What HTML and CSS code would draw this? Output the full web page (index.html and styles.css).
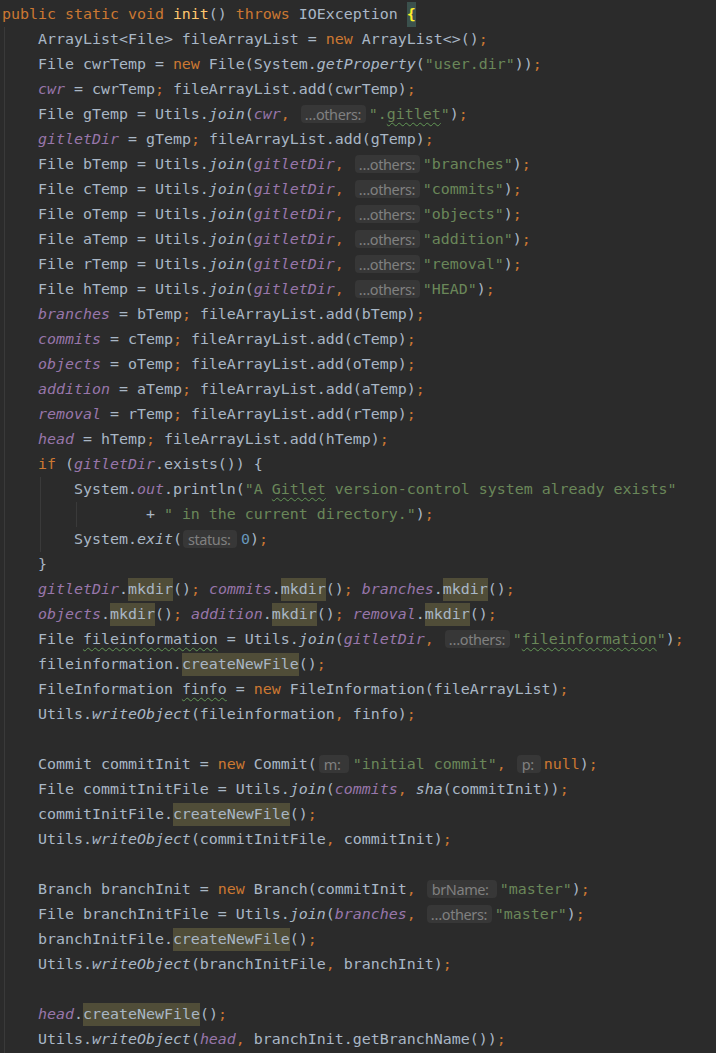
FILE: index.html
```html
<!DOCTYPE html>
<html>
<head>
<meta charset="utf-8">
<link rel="stylesheet" href="styles.css">
</head>
<body>
<div class="editor">
<div class="guide g0"></div>
<div class="guide g4"></div>
<div class="guide g8"></div>
<div class="ln"><span class="k">public static void </span><span class="m">init</span>() <span class="k">throws </span>IOException <span class="br">{</span></div>
<div class="ln">    ArrayList&lt;File&gt; fileArrayList = <span class="k">new</span> ArrayList&lt;&gt;()<span class="k">;</span></div>
<div class="ln">    File cwrTemp = <span class="k">new</span> File(System.<span class="sm">getProperty</span>(<span class="s">"user.dir"</span>))<span class="k">;</span></div>
<div class="ln">    <span class="f">cwr</span> = cwrTemp<span class="k">;</span> fileArrayList.add(cwrTemp)<span class="k">;</span></div>
<div class="ln">    File gTemp = Utils.<span class="sm">join</span>(<span class="f">cwr</span><span class="k">, </span><span class="h others">…others:</span><span class="s">".<span class="ty">gitlet</span>"</span>)<span class="k">;</span></div>
<div class="ln">    <span class="f">gitletDir</span> = gTemp<span class="k">;</span> fileArrayList.add(gTemp)<span class="k">;</span></div>
<div class="ln">    File bTemp = Utils.<span class="sm">join</span>(<span class="f">gitletDir</span><span class="k">, </span><span class="h others">…others:</span><span class="s">"branches"</span>)<span class="k">;</span></div>
<div class="ln">    File cTemp = Utils.<span class="sm">join</span>(<span class="f">gitletDir</span><span class="k">, </span><span class="h others">…others:</span><span class="s">"commits"</span>)<span class="k">;</span></div>
<div class="ln">    File oTemp = Utils.<span class="sm">join</span>(<span class="f">gitletDir</span><span class="k">, </span><span class="h others">…others:</span><span class="s">"objects"</span>)<span class="k">;</span></div>
<div class="ln">    File aTemp = Utils.<span class="sm">join</span>(<span class="f">gitletDir</span><span class="k">, </span><span class="h others">…others:</span><span class="s">"addition"</span>)<span class="k">;</span></div>
<div class="ln">    File rTemp = Utils.<span class="sm">join</span>(<span class="f">gitletDir</span><span class="k">, </span><span class="h others">…others:</span><span class="s">"removal"</span>)<span class="k">;</span></div>
<div class="ln">    File hTemp = Utils.<span class="sm">join</span>(<span class="f">gitletDir</span><span class="k">, </span><span class="h others">…others:</span><span class="s">"HEAD"</span>)<span class="k">;</span></div>
<div class="ln">    <span class="f">branches</span> = bTemp<span class="k">;</span> fileArrayList.add(bTemp)<span class="k">;</span></div>
<div class="ln">    <span class="f">commits</span> = cTemp<span class="k">;</span> fileArrayList.add(cTemp)<span class="k">;</span></div>
<div class="ln">    <span class="f">objects</span> = oTemp<span class="k">;</span> fileArrayList.add(oTemp)<span class="k">;</span></div>
<div class="ln">    <span class="f">addition</span> = aTemp<span class="k">;</span> fileArrayList.add(aTemp)<span class="k">;</span></div>
<div class="ln">    <span class="f">removal</span> = rTemp<span class="k">;</span> fileArrayList.add(rTemp)<span class="k">;</span></div>
<div class="ln">    <span class="f">head</span> = hTemp<span class="k">;</span> fileArrayList.add(hTemp)<span class="k">;</span></div>
<div class="ln">    <span class="k">if </span>(<span class="f">gitletDir</span>.exists()) {</div>
<div class="ln">        System.<span class="f">out</span>.println(<span class="s">"A <span class="ty">Gitlet</span> version-control system already exists"</span></div>
<div class="ln">                + <span class="s">" in the current directory."</span>)<span class="k">;</span></div>
<div class="ln">        System.<span class="sm">exit</span>(<span class="h status">status:</span><span class="n">0</span>)<span class="k">;</span></div>
<div class="ln">    }</div>
<div class="ln">    <span class="f">gitletDir</span>.<span class="hl">mkdir</span>()<span class="k">;</span> <span class="f">commits</span>.<span class="hl">mkdir</span>()<span class="k">;</span> <span class="f">branches</span>.<span class="hl">mkdir</span>()<span class="k">;</span></div>
<div class="ln">    <span class="f">objects</span>.<span class="hl">mkdir</span>()<span class="k">;</span> <span class="f">addition</span>.<span class="hl">mkdir</span>()<span class="k">;</span> <span class="f">removal</span>.<span class="hl">mkdir</span>()<span class="k">;</span></div>
<div class="ln">    File <span class="ty">fileinformation</span> = Utils.<span class="sm">join</span>(<span class="f">gitletDir</span><span class="k">, </span><span class="h others">…others:</span><span class="s">"<span class="ty">fileinformation</span>"</span>)<span class="k">;</span></div>
<div class="ln">    fileinformation.<span class="hl">createNewFile</span>()<span class="k">;</span></div>
<div class="ln">    FileInformation <span class="ty">finfo</span> = <span class="k">new</span> FileInformation(fileArrayList)<span class="k">;</span></div>
<div class="ln">    Utils.<span class="sm">writeObject</span>(fileinformation<span class="k">, </span>finfo)<span class="k">;</span></div>
<div class="ln"> </div>
<div class="ln">    Commit commitInit = <span class="k">new</span> Commit(<span class="h hm">m:</span><span class="s">"initial commit"</span><span class="k">, </span><span class="h hp">p:</span><span class="k">null</span>)<span class="k">;</span></div>
<div class="ln">    File commitInitFile = Utils.<span class="sm">join</span>(<span class="f">commits</span><span class="k">, </span><span class="sm">sha</span>(commitInit))<span class="k">;</span></div>
<div class="ln">    commitInitFile.<span class="hl">createNewFile</span>()<span class="k">;</span></div>
<div class="ln">    Utils.<span class="sm">writeObject</span>(commitInitFile<span class="k">, </span>commitInit)<span class="k">;</span></div>
<div class="ln"> </div>
<div class="ln">    Branch branchInit = <span class="k">new</span> Branch(commitInit<span class="k">, </span><span class="h brname">brName:</span><span class="s">"master"</span>)<span class="k">;</span></div>
<div class="ln">    File branchInitFile = Utils.<span class="sm">join</span>(<span class="f">branches</span><span class="k">, </span><span class="h others">…others:</span><span class="s">"master"</span>)<span class="k">;</span></div>
<div class="ln">    branchInitFile.<span class="hl">createNewFile</span>()<span class="k">;</span></div>
<div class="ln">    Utils.<span class="sm">writeObject</span>(branchInitFile<span class="k">, </span>branchInit)<span class="k">;</span></div>
<div class="ln"> </div>
<div class="ln">    <span class="f">head</span>.<span class="hl">createNewFile</span>()<span class="k">;</span></div>
<div class="ln">    Utils.<span class="sm">writeObject</span>(<span class="f">head</span><span class="k">, </span>branchInit.getBranchName())<span class="k">;</span></div>
</div>
</body>
</html>
```
FILE: styles.css
```css
html, body {
  margin: 0;
  padding: 0;
  background: #2b2b2b;
}

.editor {
  position: relative;
  box-sizing: border-box;
  min-height: 1053px;
  padding-top: 2px;
  background: #2b2b2b;
  color: #a9b7c6;
  font-family: "DejaVu Sans Mono", "Liberation Mono", monospace;
  font-size: 14.95px;
  overflow: hidden;
}

.ln {
  height: 25px;
  line-height: 25px;
  padding-left: 2px;
  white-space: pre;
}

.k { color: #cc7832; }
.s { color: #6a8759; }
.n { color: #6897bb; }
.m { color: #ffc66d; }
.f { color: #9876aa; font-style: italic; }
.sm { font-style: italic; }

.br {
  display: inline-block;
  height: 25px;
  line-height: 25px;
  vertical-align: top;
  background: #3b514d;
  color: #ffef28;
  font-weight: bold;
}

.hl {
  background: #504d38;
  padding: 2px 0 3px;
}

.ty {
  text-decoration: underline wavy #629755;
  text-decoration-thickness: 1px;
  text-underline-offset: 3px;
}

.h {
  display: inline-block;
  box-sizing: border-box;
  height: 18px;
  line-height: 18px;
  margin: 3px 3px 0 2px;
  padding-left: 5px;
  vertical-align: top;
  border-radius: 4px;
  background: #373737;
  color: #808080;
  font-family: "Noto Sans", "Open Sans", sans-serif;
  font-size: 14.5px;
  font-style: normal;
  letter-spacing: -0.4px;
  white-space: nowrap;
  overflow: hidden;
}

.others { width: 65px; padding-left: 4px; }
.status { width: 54px; margin-right: 4px; margin-left: 1px; }
.hm { width: 30px; margin-right: 4px; }
.hp { width: 24px; }
.brname { width: 70px; }

.guide {
  position: absolute;
  width: 1px;
  background: #3a3a3a;
}

.g0 { left: 4px; top: 27px; bottom: 0; }
.g4 { left: 40px; top: 477px; height: 75px; }
.g8 { left: 76px; top: 502px; height: 25px; }
```
